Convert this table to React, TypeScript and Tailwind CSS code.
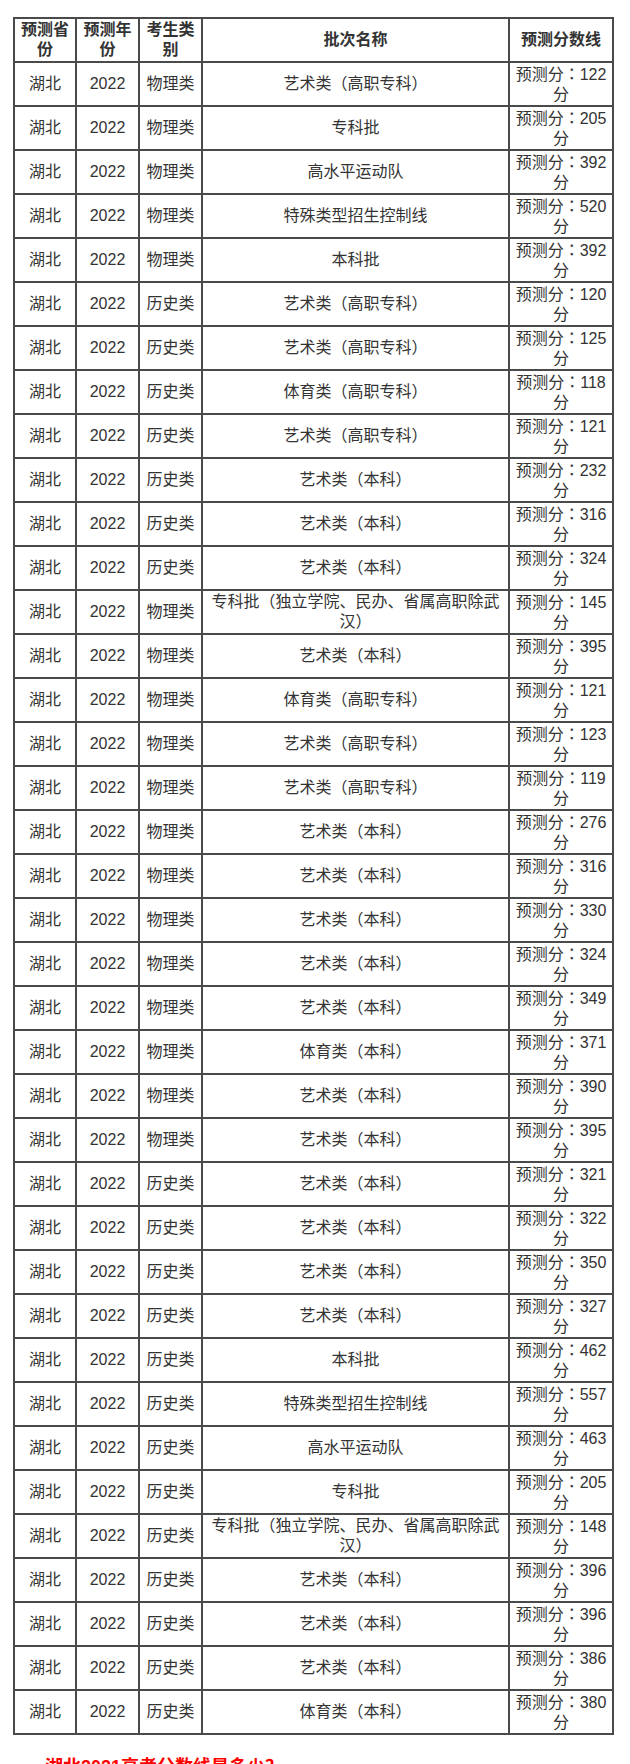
import React from "react";

type Row = [string, string, string];

const rows: Row[] = [
  ["物理类", "艺术类（高职专科）", "122"],
  ["物理类", "专科批", "205"],
  ["物理类", "高水平运动队", "392"],
  ["物理类", "特殊类型招生控制线", "520"],
  ["物理类", "本科批", "392"],
  ["历史类", "艺术类（高职专科）", "120"],
  ["历史类", "艺术类（高职专科）", "125"],
  ["历史类", "体育类（高职专科）", "118"],
  ["历史类", "艺术类（高职专科）", "121"],
  ["历史类", "艺术类（本科）", "232"],
  ["历史类", "艺术类（本科）", "316"],
  ["历史类", "艺术类（本科）", "324"],
  ["物理类", "专科批（独立学院、民办、省属高职除武汉）", "145"],
  ["物理类", "艺术类（本科）", "395"],
  ["物理类", "体育类（高职专科）", "121"],
  ["物理类", "艺术类（高职专科）", "123"],
  ["物理类", "艺术类（高职专科）", "119"],
  ["物理类", "艺术类（本科）", "276"],
  ["物理类", "艺术类（本科）", "316"],
  ["物理类", "艺术类（本科）", "330"],
  ["物理类", "艺术类（本科）", "324"],
  ["物理类", "艺术类（本科）", "349"],
  ["物理类", "体育类（本科）", "371"],
  ["物理类", "艺术类（本科）", "390"],
  ["物理类", "艺术类（本科）", "395"],
  ["历史类", "艺术类（本科）", "321"],
  ["历史类", "艺术类（本科）", "322"],
  ["历史类", "艺术类（本科）", "350"],
  ["历史类", "艺术类（本科）", "327"],
  ["历史类", "本科批", "462"],
  ["历史类", "特殊类型招生控制线", "557"],
  ["历史类", "高水平运动队", "463"],
  ["历史类", "专科批", "205"],
  ["历史类", "专科批（独立学院、民办、省属高职除武汉）", "148"],
  ["历史类", "艺术类（本科）", "396"],
  ["历史类", "艺术类（本科）", "396"],
  ["历史类", "艺术类（本科）", "386"],
  ["历史类", "体育类（本科）", "380"],
];

const cell =
  "h-[44px] border-r-2 border-b-2 border-[#4a4a4a] px-[2px] flex items-center justify-center text-center leading-[20px]";

function Cell({ children, bold }: { children: React.ReactNode; bold?: boolean }) {
  return (
    <div className={cell + (bold ? " font-bold" : "")}>
      <span>{children}</span>
    </div>
  );
}

export default function App() {
  return (
    <div
      className="bg-white text-[#333333] text-[16px]"
      style={{ fontFamily: '"Liberation Sans", "Noto Sans CJK SC", sans-serif' }}
    >
      <div className="pt-[17px] pl-[13px]">
        <div className="grid w-[601px] grid-cols-[62px_63px_63px_307px_104px] border-l-2 border-t-2 border-[#4a4a4a]">
          <Cell bold>预测省份</Cell>
          <Cell bold>预测年份</Cell>
          <Cell bold>考生类别</Cell>
          <Cell bold>批次名称</Cell>
          <Cell bold>预测分数线</Cell>
          {rows.map((r, i) => (
            <React.Fragment key={i}>
              <Cell>湖北</Cell>
              <Cell>2022</Cell>
              <Cell>{r[0]}</Cell>
              <Cell>{r[1]}</Cell>
              <Cell>
                预测分
                <span className="font-['Noto_Sans_CJK_TC',sans-serif]">：</span>
                {r[2]}分
              </Cell>
            </React.Fragment>
          ))}
        </div>
      </div>
      <p className="mt-[19px] pl-[45px] text-[18px] leading-[27px] font-bold text-[#ff0000]">
        湖北2021高考分数线是多少？
      </p>
    </div>
  );
}
